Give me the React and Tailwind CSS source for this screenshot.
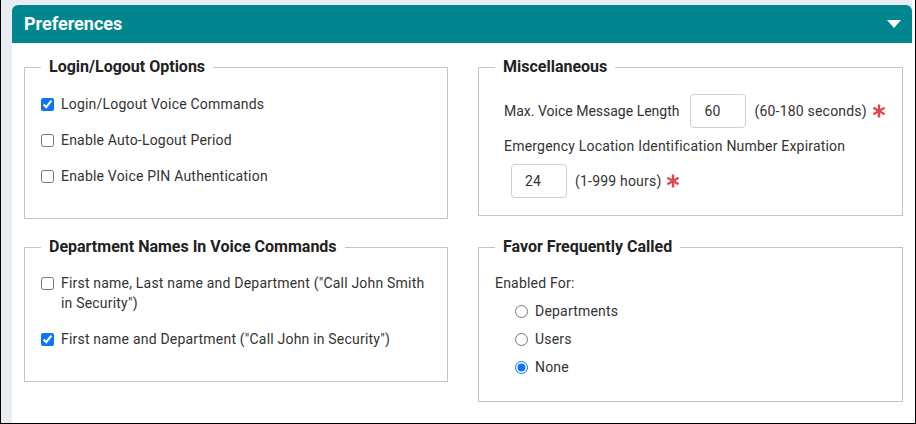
import React from "react";

const Asterisk = () => (
    <svg width="14" height="14" viewBox="0 0 14 14" className="inline-block">
        <g stroke="#e0474c" strokeWidth="2.4" strokeLinecap="butt">
            <line x1="7" y1="0.5" x2="7" y2="13.5" />
            <line x1="1.4" y1="3.8" x2="12.6" y2="10.2" />
            <line x1="1.4" y1="10.2" x2="12.6" y2="3.8" />
        </g>
    </svg>
);

const Fieldset = ({ title, className, children }) => (
    <fieldset className={`border border-[#c4c4c4] px-4 ${className}`}>
        <legend className="px-2 text-[16px] leading-5 font-bold text-[#222] tracking-normal">{title}</legend>
        {children}
    </fieldset>
);

const Check = ({ label, checked }) => (
    <label className="flex items-start gap-[7px]">
        <input
            type="checkbox"
            defaultChecked={checked}
            className="mt-[3.5px] w-[13px] h-[13px] shrink-0 accent-[#0b75f5]"
        />
        <span>{label}</span>
    </label>
);

const Radio = ({ label, checked }) => (
    <label className="flex items-center gap-[7px]">
        <input
            type="radio"
            name="favor"
            defaultChecked={checked}
            className="w-[13px] h-[13px] shrink-0 accent-[#0b75f5]"
        />
        <span>{label}</span>
    </label>
);

const NumInput = ({ value, className = "" }) => (
    <input
        type="text"
        defaultValue={value}
        className={`w-[56px] h-[34px] shrink-0 border border-[#d0d0d0] rounded px-[13px] text-[14px] text-[#333] outline-none ${className}`}
    />
);

export default function App() {
    return (
        <div
            className="w-[916px] h-[424px] flex border-l border-r border-b border-black bg-white overflow-hidden text-[14px] leading-5 tracking-[0.2px] text-[#333]"
            style={{ fontFamily: "Roboto, 'Liberation Sans', sans-serif" }}
        >
            <div className="flex-1 bg-[#e9ecf3] pl-[11px] pt-[5px] flex flex-col">
                <div className="flex-1 flex flex-col bg-white rounded-t-md">
                    {/* header */}
                    <div className="h-[38px] bg-[#00868f] rounded-t-md flex items-center justify-between pl-3 pr-[11px]">
                        <span className="text-white text-[18px] font-bold tracking-normal">Preferences</span>
                        <svg width="14" height="8" viewBox="0 0 14 8">
                            <path d="M0 0 H14 L7 8 Z" fill="#fff" />
                        </svg>
                    </div>

                    {/* body */}
                    <div className="pl-3 pt-[14px] grid grid-cols-[424px_425px] gap-x-[30px]">
                        <div className="flex flex-col">
                            <Fieldset title="Login/Logout Options" className="h-[162px]">
                                <div className="mt-[17px] flex flex-col gap-4">
                                    <Check label="Login/Logout Voice Commands" checked />
                                    <Check label="Enable Auto-Logout Period" />
                                    <Check label="Enable Voice PIN Authentication" />
                                </div>
                            </Fieldset>
                            <Fieldset title="Department Names In Voice Commands" className="h-[145px] mt-[18px]">
                                <div className="mt-4 flex flex-col gap-4">
                                    <Check label={'First name, Last name and Department ("Call John Smith in Security")'} />
                                    <Check label={'First name and Department ("Call John in Security")'} checked />
                                </div>
                            </Fieldset>
                        </div>

                        <div className="flex flex-col">
                            <Fieldset title="Miscellaneous" className="h-[159px]">
                                <div className="pl-[9px] mt-[17px] whitespace-nowrap">
                                    <div className="flex items-center">
                                        <span className="tracking-normal">Max. Voice Message Length</span>
                                        <NumInput value="60" className="ml-[11px]" />
                                        <span className="ml-2">(60-180 seconds)</span>
                                        <span className="ml-[5px] flex"><Asterisk /></span>
                                    </div>
                                    <div className="mt-2">Emergency Location Identification Number Expiration</div>
                                    <div className="mt-2 flex items-center pl-[7px]">
                                        <NumInput value="24" />
                                        <span className="ml-2">(1-999 hours)</span>
                                        <span className="ml-[5px] flex"><Asterisk /></span>
                                    </div>
                                </div>
                            </Fieldset>
                            <Fieldset title="Favor Frequently Called" className="h-[165px] mt-[21px]">
                                <div className="mt-4">Enabled For:</div>
                                <div className="mt-2 pl-5 flex flex-col gap-2">
                                    <Radio label="Departments" />
                                    <Radio label="Users" />
                                    <Radio label="None" checked />
                                </div>
                            </Fieldset>
                        </div>
                    </div>
                </div>
            </div>
            <div className="w-[3px] bg-white" />
        </div>
    );
}
